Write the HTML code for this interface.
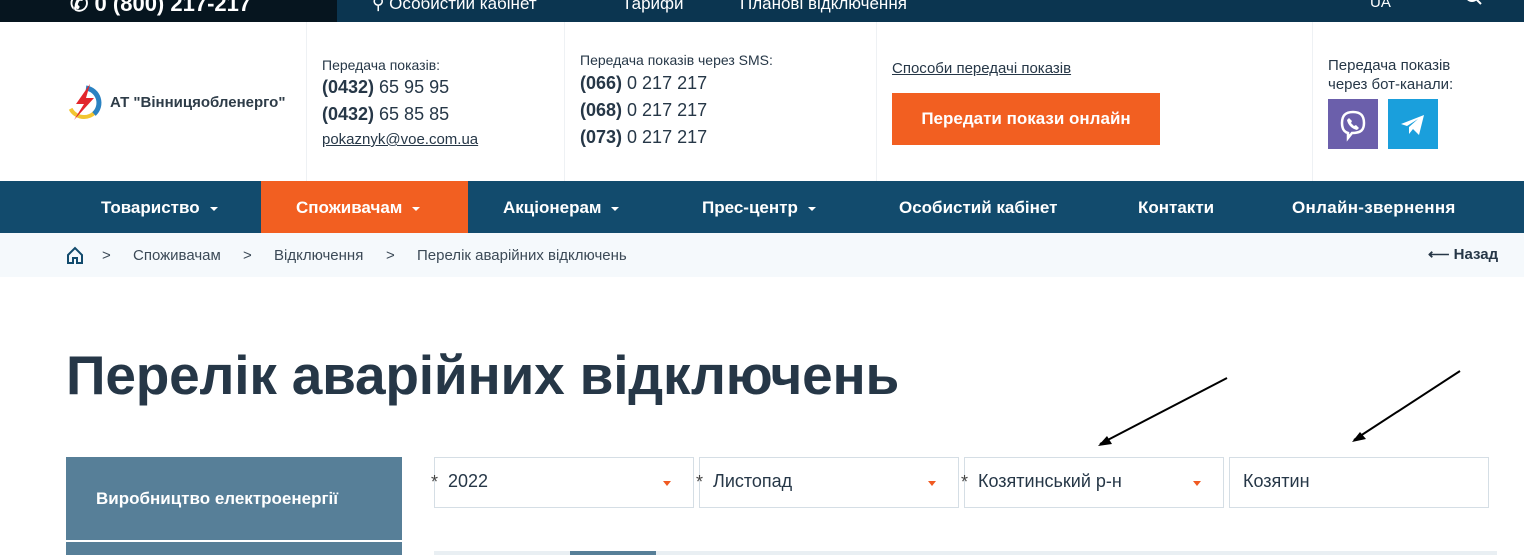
<!DOCTYPE html><html><head><meta charset="utf-8"><style>
*{margin:0;padding:0;box-sizing:border-box}
body{width:1524px;height:555px;overflow:hidden;background:#fff;font-family:"Liberation Sans",sans-serif;color:#263747;position:relative}
.a{position:absolute;white-space:nowrap}
.top1{left:0;top:0;width:337px;height:22px;background:#06151f}
.top2{left:337px;top:0;width:1187px;height:22px;background:#0b3550}
.nav{left:0;top:181px;width:1524px;height:52px;background:#124b6d}
.nav span{position:absolute;top:17px;color:#fff;font-weight:bold;font-size:17px}
.car{display:inline-block;border-left:4px solid transparent;border-right:4px solid transparent;border-top:4px solid #fff;margin-left:10px;vertical-align:middle}
.bc{left:0;top:233px;width:1524px;height:44px;background:#f5f9fc}
.sm{font-size:14px;color:#263747}
.ph{font-size:18px}
.sel{position:absolute;top:457px;height:51px;border:1px solid #d5dee5;background:#fff;font-size:18px}
.sel b{font-weight:normal;position:absolute;left:-4px;top:14px;color:#444}
.sel i{font-style:normal;position:absolute;left:13px;top:13px}
.sel u{position:absolute;right:22px;top:23px;border-left:4px solid transparent;border-right:4px solid transparent;border-top:5px solid #f05a22}
.vl{position:absolute;top:22px;width:1px;height:159px;background:#eef1f4}
.bcs{position:absolute;top:247px;font-size:15px;color:#3c4a57}
</style></head><body>
<div class="a top1"></div><div class="a top2"></div>
<div class="a" style="left:70px;top:-9px;color:#fff;font-weight:bold;font-size:22px">✆ 0 (800) 217-217</div>
<div class="a" style="left:372px;top:-6px;color:#fff;font-size:17px">⚲ Особистий кабінет</div>
<div class="a" style="left:622px;top:-6px;color:#fff;font-size:17px">Тарифи</div>
<div class="a" style="left:740px;top:-6px;color:#fff;font-size:17px">Планові відключення</div>
<div class="a" style="left:1370px;top:-6px;color:#fff;font-size:15px">UA</div>
<svg class="a" style="left:1464px;top:-6px" width="20" height="12"><circle cx="8" cy="1" r="6" fill="none" stroke="#fff" stroke-width="2"/><path d="M12 5l5 5" stroke="#fff" stroke-width="2"/></svg>
<div class="vl" style="left:306px"></div><div class="vl" style="left:564px"></div><div class="vl" style="left:876px"></div><div class="vl" style="left:1312px"></div>
<svg class="a" style="left:64px;top:82px" width="40" height="40" viewBox="0 0 40 40"><circle cx="20" cy="20" r="15" fill="none" stroke="#f2c531" stroke-width="4" stroke-dasharray="40 60"/><path d="M22 6 A15 15 0 0 1 30 32" fill="none" stroke="#2a82c2" stroke-width="5"/><path d="M26 2 L12 22 L20 22 L10 38 L30 16 L22 16 Z" fill="#e2262c"/></svg>
<div class="a" style="left:110px;top:94px;font-size:15px;font-weight:bold;color:#2e3c48">АТ "Вінницяобленерго"</div>
<div class="a sm" style="left:322px;top:57px">Передача показів:</div>
<div class="a ph" style="left:322px;top:77px"><b>(0432)</b> 65 95 95</div>
<div class="a ph" style="left:322px;top:104px"><b>(0432)</b> 65 85 85</div>
<div class="a" style="left:322px;top:131px;font-size:15px;text-decoration:underline">pokaznyk@voe.com.ua</div>
<div class="a sm" style="left:580px;top:52px">Передача показів через SMS:</div>
<div class="a ph" style="left:580px;top:73px"><b>(066)</b> 0 217 217</div>
<div class="a ph" style="left:580px;top:100px"><b>(068)</b> 0 217 217</div>
<div class="a ph" style="left:580px;top:127px"><b>(073)</b> 0 217 217</div>
<div class="a" style="left:892px;top:60px;font-size:15px;text-decoration:underline">Способи передачі показів</div>
<div class="a" style="left:892px;top:93px;width:268px;height:52px;background:#f25f21;color:#fff;font-weight:bold;font-size:17px;text-align:center;line-height:52px">Передати покази онлайн</div>
<div class="a" style="left:1328px;top:56px;line-height:19px;font-size:15px">Передача показів<br>через бот-канали:</div>
<div class="a" style="left:1328px;top:99px;width:50px;height:50px;background:#6b5fab"><svg width="50" height="50"><path d="M25 13c-8 0-11 4-11 11 0 6 2 9 6 10v5l4-5c9 0 12-3 12-10s-3-11-11-11z" fill="none" stroke="#fff" stroke-width="2.5"/><path d="M21 19l3 3-1 2 3 3 2-1 3 3-2 2c-5-1-9-5-10-10z" fill="#fff"/></svg></div>
<div class="a" style="left:1388px;top:99px;width:50px;height:50px;background:#1a9fdc"><svg width="50" height="50"><path d="M13 25l23-9-5 20-6-6-4 5v-7l9-8-11 7z" fill="#fff"/></svg></div>
<div class="a nav">
<span style="left:101px">Товариство<i class="car"></i></span>
<div style="position:absolute;left:261px;top:0;width:207px;height:52px;background:#f25f21"></div>
<span style="left:296px">Споживачам<i class="car"></i></span>
<span style="left:503px">Акціонерам<i class="car"></i></span>
<span style="left:702px">Прес-центр<i class="car"></i></span>
<span style="left:899px">Особистий кабінет</span>
<span style="left:1138px">Контакти</span>
<span style="left:1292px;letter-spacing:0.3px">Онлайн-звернення</span>
</div>
<div class="a bc"></div>
<svg class="a" style="left:66px;top:246px" width="18" height="18"><path d="M2 9L9 2l7 7v8H11v-5H7v5H2z" fill="none" stroke="#124b6d" stroke-width="2"/></svg>
<div class="bcs" style="left:102px">&gt;</div>
<div class="bcs" style="left:133px">Споживачам</div>
<div class="bcs" style="left:243px">&gt;</div>
<div class="bcs" style="left:274px">Відключення</div>
<div class="bcs" style="left:386px">&gt;</div>
<div class="bcs" style="left:417px">Перелік аварійних відключень</div>
<div class="a" style="left:1428px;top:245px;font-size:15px;font-weight:bold">⟵ Назад</div>
<div class="a" style="left:66px;top:343px;font-size:55px;font-weight:bold;color:#263747;letter-spacing:-0.2px">Перелік аварійних відключень</div>
<svg class="a" style="left:1090px;top:368px" width="380" height="80"><path d="M137 10L10 76M370 3L264 72" stroke="#000" stroke-width="2"/><path d="M8 78l14-2-5-8z M262 74l14-3-6-7z" fill="#000"/></svg>
<div class="a" style="left:66px;top:457px;width:336px;height:83px;background:#577f98;color:#fff;font-weight:bold;font-size:17px;line-height:83px;padding-left:30px">Виробництво електроенергії</div>
<div class="a" style="left:66px;top:542px;width:336px;height:13px;background:#577f98"></div>
<div class="sel" style="left:434px;width:260px"><b>*</b><i>2022</i><u></u></div>
<div class="sel" style="left:699px;width:260px"><b>*</b><i>Листопад</i><u></u></div>
<div class="sel" style="left:964px;width:260px"><b>*</b><i>Козятинський р-н</i><u></u></div>
<div class="sel" style="left:1229px;width:260px"><i>Козятин</i></div>
<div class="a" style="left:434px;top:551px;width:1063px;height:4px;background:#e9eff3"></div>
<div class="a" style="left:570px;top:551px;width:86px;height:4px;background:#577f98"></div>
</body></html>
